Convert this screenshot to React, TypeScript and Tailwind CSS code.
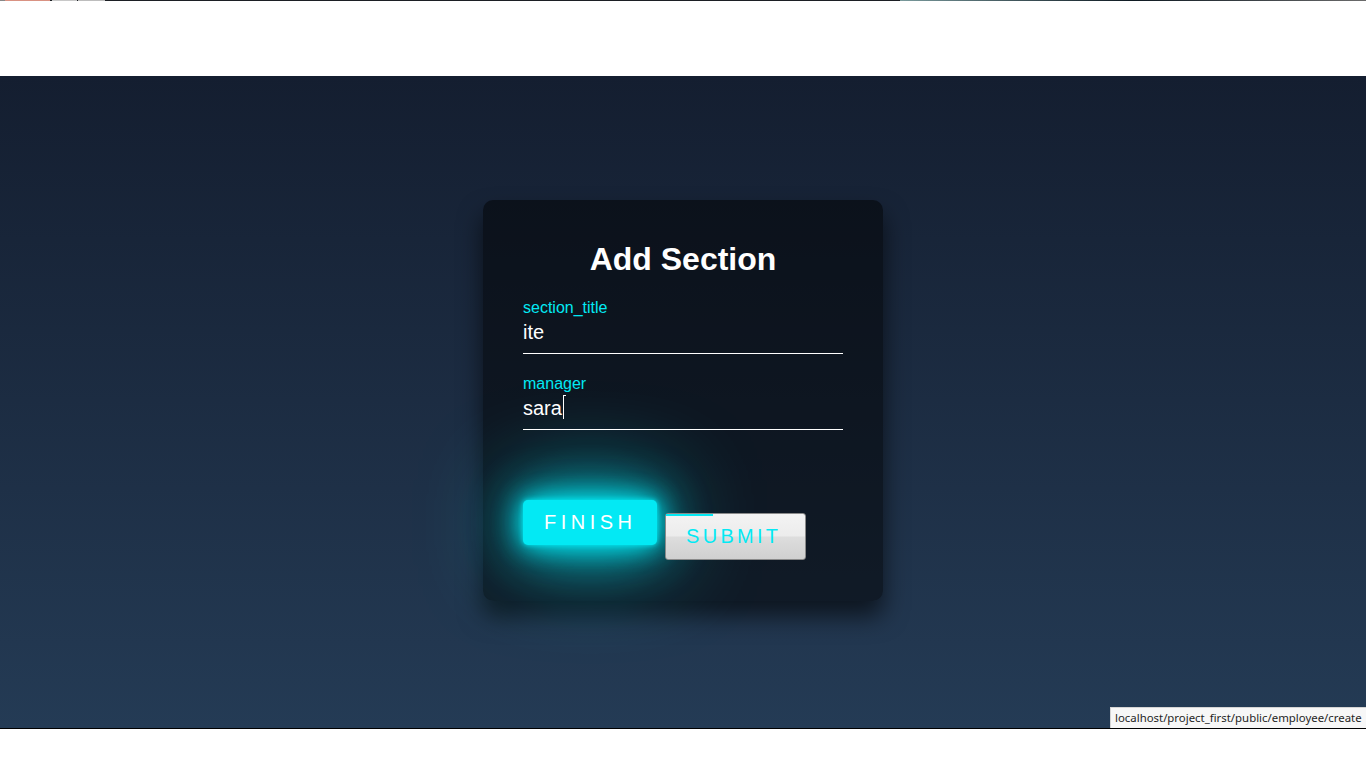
import { useState } from 'react';

export default function App() {
    const [title, setTitle] = useState('ite');
    const [manager, setManager] = useState('sara');

    return (
        <div className="w-[1366px] h-[768px] flex flex-col bg-white overflow-hidden" style={{ fontFamily: '"Liberation Sans", Arial, sans-serif' }}>
            {/* thin strip left over from the window above */}
            <div className="h-px flex bg-[#1c1f24]">
                <div className="w-[5px] bg-[#888]" />
                <div className="w-[45px] bg-[#d99283]" />
                <div className="w-[2px]" />
                <div className="w-[25px] bg-[#c8c8c8]" />
                <div className="w-[1px]" />
                <div className="w-[27px] bg-[#bdbdbd]" />
                <div className="flex-1" />
                <div className="w-[466px] bg-gradient-to-r from-[#7a9a9c] via-[#0f1a22] to-[#6b6b6b]" />
            </div>
            <div className="h-[75px] bg-white" />

            <main className="relative h-[652px] bg-gradient-to-b from-[#141e30] to-[#243b55] flex justify-center pt-[124px]">
                <div className="w-[400px] h-[401px] self-start rounded-[10px] bg-black/50 shadow-[0_15px_25px_rgba(0,0,0,0.6)] p-10 flex flex-col">
                    <h2 className="text-[32px] leading-[34px] font-bold text-white text-center mt-[2px] mb-[23px]">Add Section</h2>

                    <div className="flex flex-col">
                        <label className="text-[16px] leading-[18px] text-[#03e9f4]">section_title</label>
                        <input
                            value={title}
                            onChange={(e) => setTitle(e.target.value)}
                            className="bg-transparent outline-none text-white text-[20px] leading-[23px] pt-[4px] pb-[9px] border-b border-white"
                        />
                    </div>

                    <div className="flex flex-col mt-[21px]">
                        <label className="text-[16px] leading-[18px] text-[#03e9f4]">manager</label>
                        <div className="relative text-white text-[20px] leading-[23px] pt-[4px] pb-[9px] border-b border-white">
                            <span>{manager}</span>
                            <span className="inline-block w-px h-[22px] bg-white align-top ml-[1px]" />
                            <span className="absolute left-[40px] top-[2px] w-[1px] h-[5px] bg-white" />
                            <span className="absolute left-[40px] top-[2px] w-[3px] h-px bg-white" />
                            <input
                                value={manager}
                                onChange={(e) => setManager(e.target.value)}
                                className="absolute inset-0 opacity-0"
                            />
                        </div>
                    </div>

                    <div className="flex items-start mt-[70px] gap-2">
                        <a
                            href="#"
                            className="w-[134px] h-[45px] rounded-[5px] bg-[#03e9f4] text-white text-[20px] leading-[23px] tracking-[4.5px] pl-[21px] pt-[11px] shadow-[0_0_5px_#03e9f4,0_0_25px_#03e9f4,0_0_50px_#03e9f4,0_0_100px_#03e9f4]"
                        >
                            FINISH
                        </a>
                        <button className="relative mt-[13px] w-[141px] h-[47px] rounded-[3px] border border-[#8a8a8a] bg-[linear-gradient(to_bottom,#f3f3f3_0%,#ececec_48%,#dddddd_52%,#d0d0d0_100%)] text-[#03e9f4] text-[20px] leading-[23px] tracking-[3.3px] flex items-start pl-[20px] pt-[11px]">
                            <span className="absolute left-0 top-0 w-[47px] h-[2px] bg-[#03e9f4]" />
                            SUBMIT
                        </button>
                    </div>
                </div>

                <div className="absolute right-0 bottom-0 h-[21px] w-[256px] bg-[#f7f7f7] border-t border-l border-[#d4d4d4] text-[#1f1f1f] text-[11.4px] leading-[19px] pl-[4px] whitespace-nowrap" style={{ fontFamily: '"Noto Sans", "Open Sans", sans-serif' }}>
                    localhost/project_first/public/employee/create
                </div>
            </main>

            <div className="h-px bg-black" />
            <div className="flex-1 bg-white" />
        </div>
    );
}
